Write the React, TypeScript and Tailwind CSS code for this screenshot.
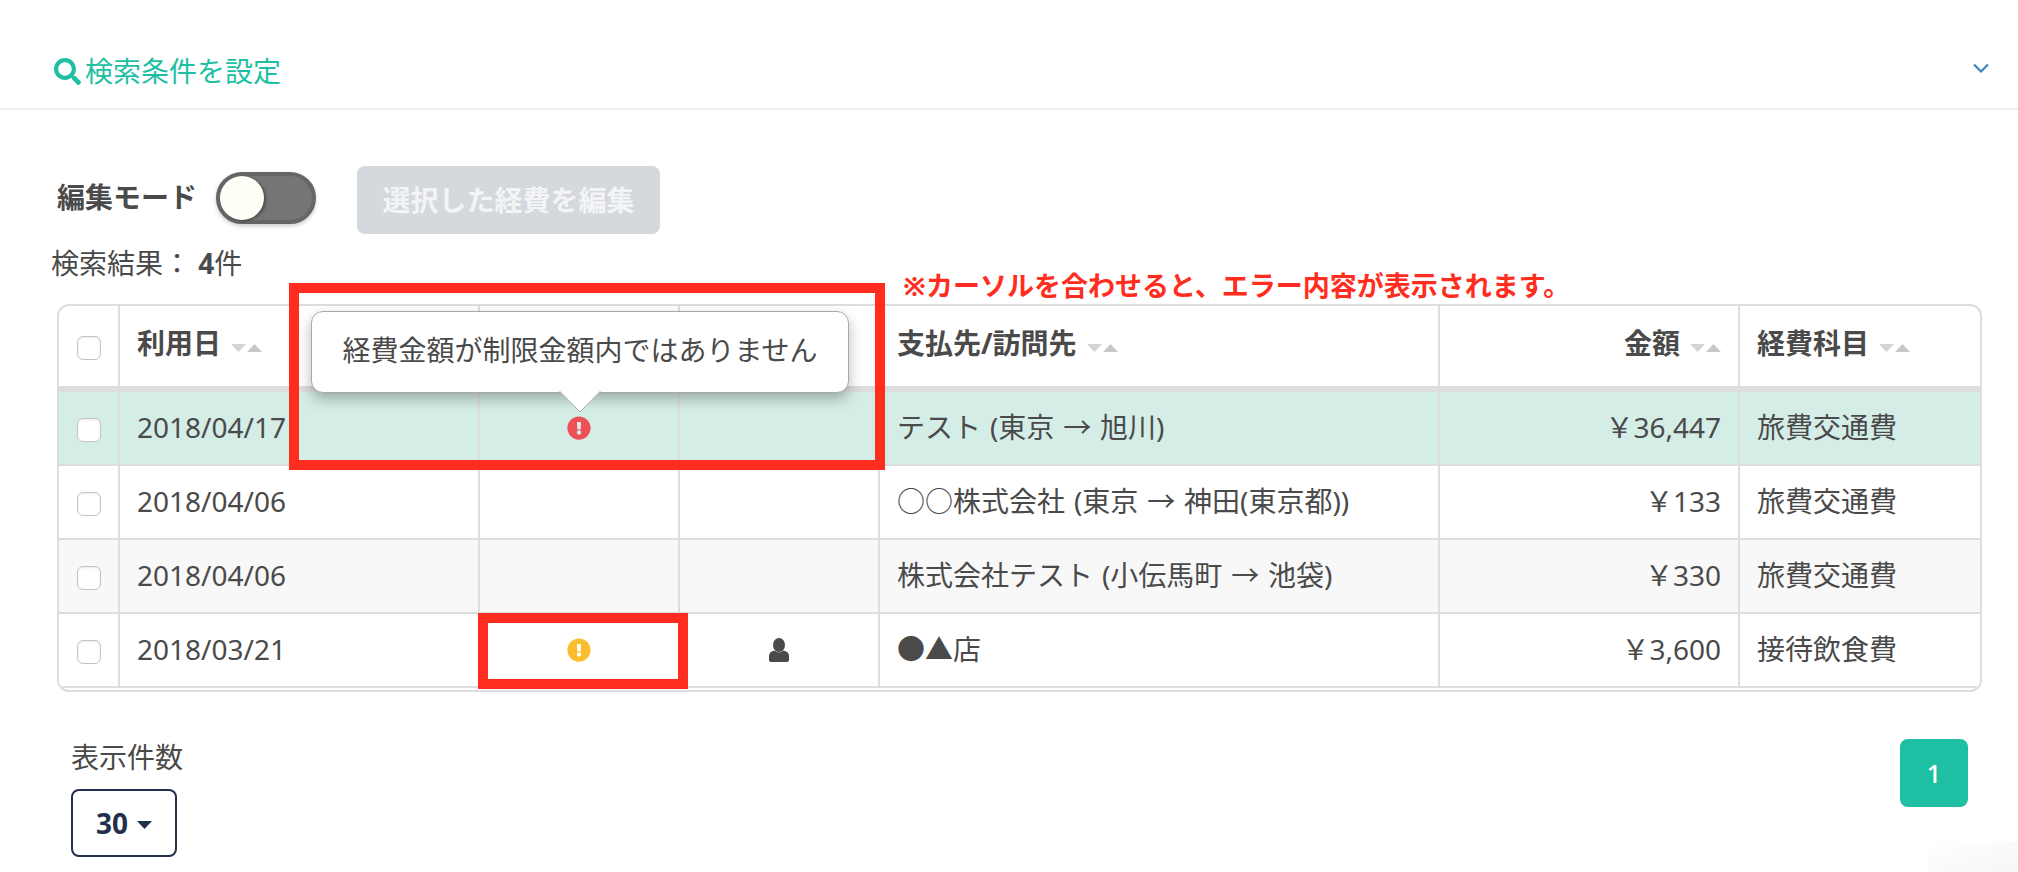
import React from "react";
import { FaSearch, FaExclamationCircle } from "react-icons/fa";

const font = "font-['Noto_Sans','Noto_Sans_CJK_JP',sans-serif]";

function Sort() {
  return (
    <svg width="31" height="8" viewBox="0 0 31 8" className="inline-block ml-[10px] align-[2px]">
      <polygon points="0,0 15,0 7.5,8" fill="#d4d4d4" />
      <polygon points="16,8 31,8 23.5,0" fill="#c8c8c8" />
    </svg>
  );
}

function Check() {
  return (
    <div className="flex justify-center pt-[4px]">
      <span className="block w-[24px] h-[24px] rounded-[6px] border border-[#c4c4c4] bg-white shadow-[inset_0_1px_2px_rgba(0,0,0,0.08)]" />
    </div>
  );
}

function Person() {
  return (
    <svg width="20" height="24" viewBox="0 0 20 24" className="block" fill="#4a4a4a">
      <ellipse cx="10" cy="7" rx="6" ry="7" />
      <path d="M0 18c0-3 2-5 6-5.5 1 1.2 2.5 1.8 4 1.8s3-.6 4-1.8c4 .5 6 2.5 6 5.5v4c0 1-1 2-2 2H2c-1 0-2-1-2-2z" />
    </svg>
  );
}

type Row = {
  date: string;
  alert?: string;
  person?: boolean;
  payee: string;
  amount: string;
  category: string;
  bg: string;
};

const rows: Row[] = [
  { date: "2018/04/17", alert: "#ee5058", payee: "テスト (東京 → 旭川)", amount: "￥36,447", category: "旅費交通費", bg: "bg-[#d5ede7]" },
  { date: "2018/04/06", payee: "○○株式会社 (東京 → 神田(東京都))", amount: "￥133", category: "旅費交通費", bg: "bg-white" },
  { date: "2018/04/06", payee: "株式会社テスト (小伝馬町 → 池袋)", amount: "￥330", category: "旅費交通費", bg: "bg-[#f8f8f8]" },
  { date: "2018/03/21", alert: "#fbbc2e", person: true, payee: "●▲店", amount: "￥3,600", category: "接待飲食費", bg: "bg-white" },
];

const th = "h-[86px] border-b-[6px] border-[#dddddd] font-bold";
const td = "h-[74px] border-b-2 border-[#dddddd] font-normal";
const line = "border-r-2";

export default function App() {
  return (
    <div className={`${font} relative w-[2018px] h-[872px] overflow-hidden bg-white text-[28px] leading-[40px] text-[#4a4a4a]`}>
      <header className="h-[110px] border-b-2 border-[#eeeeee] flex items-center justify-between pl-[54px] pr-[29px] pt-[32px]">
        <div className="flex items-center gap-[4px] text-[#1fbfa3]">
          <FaSearch size={27} className="mt-[2px]" />
          <span className="mt-[2px]">検索条件を設定</span>
        </div>
        <svg width="16" height="10" viewBox="0 0 16 10" fill="none" stroke="#3d84c0" strokeWidth="2.2" className="-mt-[4px]">
          <path d="M1 1.5 8 8.5 15 1.5" />
        </svg>
      </header>

      <div className="mt-[56px] pl-[57px] flex items-start h-[68px]">
        <span className="font-bold mt-[11px]">編集モード</span>
        <span className="mt-[6px] ml-[19px] w-[100px] h-[52px] rounded-full bg-[#757575] border-[4px] border-[#666666] flex items-center shadow-[0_2px_4px_rgba(0,0,0,0.2)]">
          <span className="w-[44px] h-[44px] rounded-full bg-[#fdfff6] shadow-[2px_1px_3px_rgba(0,0,0,0.35)]" />
        </span>
        <button className="ml-[41px] w-[303px] h-[68px] rounded-[8px] bg-[#d5d8dc] text-[#f3f4f6] font-bold">
          選択した経費を編集
        </button>
      </div>

      <div className="mt-[9px] pl-[51px] h-[40px]">
        検索結果： <span className="font-bold">4</span>件
      </div>

      <div className="relative mt-[21px] ml-[57px] w-[1925px]">
        <div className="border-2 border-[#dddddd] rounded-[12px] pb-[2px] overflow-hidden">
          <table className="table-fixed w-[1921px] border-separate border-spacing-0">
            <colgroup>
              <col className="w-[61px]" />
              <col className="w-[360px]" />
              <col className="w-[200px]" />
              <col className="w-[200px]" />
              <col className="w-[560px]" />
              <col className="w-[300px]" />
              <col className="w-[240px]" />
            </colgroup>
            <thead>
              <tr>
                <th className={`${th} ${line}`}><Check /></th>
                <th className={`${th} ${line} pl-[17px] pb-[6px] text-left`}>利用日<Sort /></th>
                <th className={`${th} ${line}`}></th>
                <th className={`${th} ${line}`}></th>
                <th className={`${th} ${line} pl-[17px] pb-[6px] text-left`}>支払先/訪問先<Sort /></th>
                <th className={`${th} ${line} pr-[17px] pb-[6px] text-right`}>金額<Sort /></th>
                <th className={`${th} pl-[17px] pb-[6px] text-left`}>経費科目<Sort /></th>
              </tr>
            </thead>
            <tbody>
              {rows.map((r, i) => (
                <tr key={i} className={r.bg}>
                  <td className={`${td} ${line}`}><Check /></td>
                  <td className={`${td} ${line} pl-[17px] pb-[2px]`}>{r.date}</td>
                  <td className={`${td} ${line}`}>
                    <div className="flex justify-center">
                      {r.alert && <FaExclamationCircle size={24} color={r.alert} className="block" />}
                    </div>
                  </td>
                  <td className={`${td} ${line}`}>
                    <div className="flex justify-center">{r.person && <Person />}</div>
                  </td>
                  <td className={`${td} ${line} pl-[17px] pb-[2px] [word-spacing:1.6px]`}>{r.payee}</td>
                  <td className={`${td} ${line} pr-[17px] pb-[2px] text-right`}>{r.amount}</td>
                  <td className={`${td} pl-[17px] pb-[2px]`}>{r.category}</td>
                </tr>
              ))}
            </tbody>
          </table>
        </div>

        <div className="absolute left-[232px] -top-[21px] w-[596px] h-[187px] border-[10px] border-[#ff2d20]" />
        <div className="absolute left-[421px] top-[309px] w-[210px] h-[76px] border-[10px] border-[#ff2d20]" />
        <div className="absolute left-[846px] -top-[38px] text-[27px] font-bold text-[#ff2d20] whitespace-nowrap">
          ※カーソルを合わせると、エラー内容が表示されます。
        </div>

        <div className="absolute left-[254px] top-[7px] w-[538px] h-[82px] bg-white rounded-[12px] border border-[#a8a8a8] shadow-[0_6px_14px_rgba(0,0,0,0.28)] flex items-center justify-center pb-[5px]">
          経費金額が制限金額内ではありません
        </div>
        <svg width="42" height="22" viewBox="0 0 42 22" className="absolute left-[502px] top-[87px]">
          <polygon points="0,0 42,0 21,21" fill="#ffffff" />
          <path d="M0.5 0 21 21 41.5 0" fill="none" stroke="#a8a8a8" />
        </svg>
      </div>

      <div className="mt-[45px] pl-[71px] pr-[50px] flex justify-between items-start">
        <div>
          <div>表示件数</div>
          <div className="mt-[12px] w-[106px] h-[68px] rounded-[8px] border-2 border-[#22304a] flex items-center justify-center gap-[9px] font-bold text-[#22304a]">
            <span>30</span>
            <svg width="15" height="8" viewBox="0 0 15 8" className="mt-[4px]">
              <polygon points="0,0 15,0 7.5,8" fill="#22304a" />
            </svg>
          </div>
        </div>
        <div className="mt-[2px] w-[68px] h-[68px] rounded-[8px] bg-[#1fbfa3] text-white text-[26px] font-medium flex items-center justify-center">
          1
        </div>
      </div>

      <div className="absolute right-0 bottom-0 w-[90px] h-[30px] bg-gradient-to-tl from-[#f6f6f6] to-transparent" />
    </div>
  );
}
